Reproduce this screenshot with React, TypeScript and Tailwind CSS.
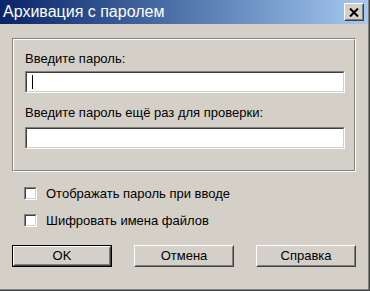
import React from 'react';

const font = { fontFamily: '"Liberation Sans", Arial, sans-serif' };

function Sunken({ caret }: { caret?: boolean }) {
  return (
    <div className="h-[22px] border border-t-[#808080] border-l-[#808080] border-r-white border-b-white">
      <div className="h-full border border-t-[#404040] border-l-[#404040] border-r-[#D4D0C8] border-b-[#D4D0C8] bg-white flex items-center pl-[5px]">
        {caret && <div className="w-px h-[14px] bg-black" />}
      </div>
    </div>
  );
}

function Check({ label }: { label: string }) {
  return (
    <div className="flex items-center h-[13px] gap-[9px]">
      <div className="w-[13px] h-[13px] shrink-0 border border-t-[#808080] border-l-[#808080] border-r-white border-b-white">
        <div className="h-full border border-t-[#404040] border-l-[#404040] border-r-[#D4D0C8] border-b-[#D4D0C8] bg-white" />
      </div>
      <span className="text-[13px] leading-[16px] text-black">{label}</span>
    </div>
  );
}

function Button({ label, isDefault }: { label: string; isDefault?: boolean }) {
  const inner = (
    <div className="h-full border border-t-white border-l-white border-r-[#404040] border-b-[#404040]">
      <div className="h-full border border-[#D4D0C8] border-r-[#808080] border-b-[#808080] flex items-center justify-center text-[13px] text-black">
        {label}
      </div>
    </div>
  );
  return (
    <div className={isDefault ? 'w-[100px] h-[22px] border border-black' : 'w-[100px] h-[22px]'}>
      {inner}
    </div>
  );
}

export default function App() {
  return (
    <div style={font} className="w-[370px] h-[291px] bg-[#D4D0C8] border-r border-b border-[#404040] overflow-hidden">
      <div className="h-full border-r border-b border-[#808080] flex flex-col">
        <div className="h-[24px] shrink-0 flex items-center justify-between pl-[3px] pr-[4px] bg-gradient-to-r from-[#0A246A] to-[#A6CAF0]">
          <span className="text-white text-[16px] leading-none">Архивация с паролем</span>
          <div className="w-[20px] h-[18px] bg-[#D4D0C8] border border-t-white border-l-white border-r-[#404040] border-b-[#404040]">
            <div className="h-full border border-[#D4D0C8] border-r-[#808080] border-b-[#808080] flex items-center justify-center">
              <svg width="10" height="9" viewBox="0 0 10 9">
                <path d="M1 0.5 L9 8.5 M9 0.5 L1 8.5" stroke="black" strokeWidth="2" />
              </svg>
            </div>
          </div>
        </div>

        <div className="mt-[14px] ml-[12px] w-[344px] border border-t-[#808080] border-l-[#808080] border-r-white border-b-white">
          <div className="border border-t-white border-l-white border-r-[#808080] border-b-[#808080] pt-[11px] pb-[21px] pl-[11px] pr-[9px]">
            <div className="text-[13px] leading-[16px] text-black mb-[4px]">Введите пароль:</div>
            <Sunken caret />
            <div className="text-[13px] leading-[16px] text-black mt-[12px] mb-[6px]">Введите пароль ещё раз для проверки:</div>
            <Sunken />
          </div>
        </div>

        <div className="mt-[15px] ml-[24px] flex flex-col gap-[14px]">
          <Check label="Отображать пароль при вводе" />
          <Check label="Шифровать имена файлов" />
        </div>

        <div className="mt-[18px] ml-[12px] flex gap-[22px]">
          <Button label="OK" isDefault />
          <Button label="Отмена" />
          <Button label="Справка" />
        </div>
      </div>
    </div>
  );
}
